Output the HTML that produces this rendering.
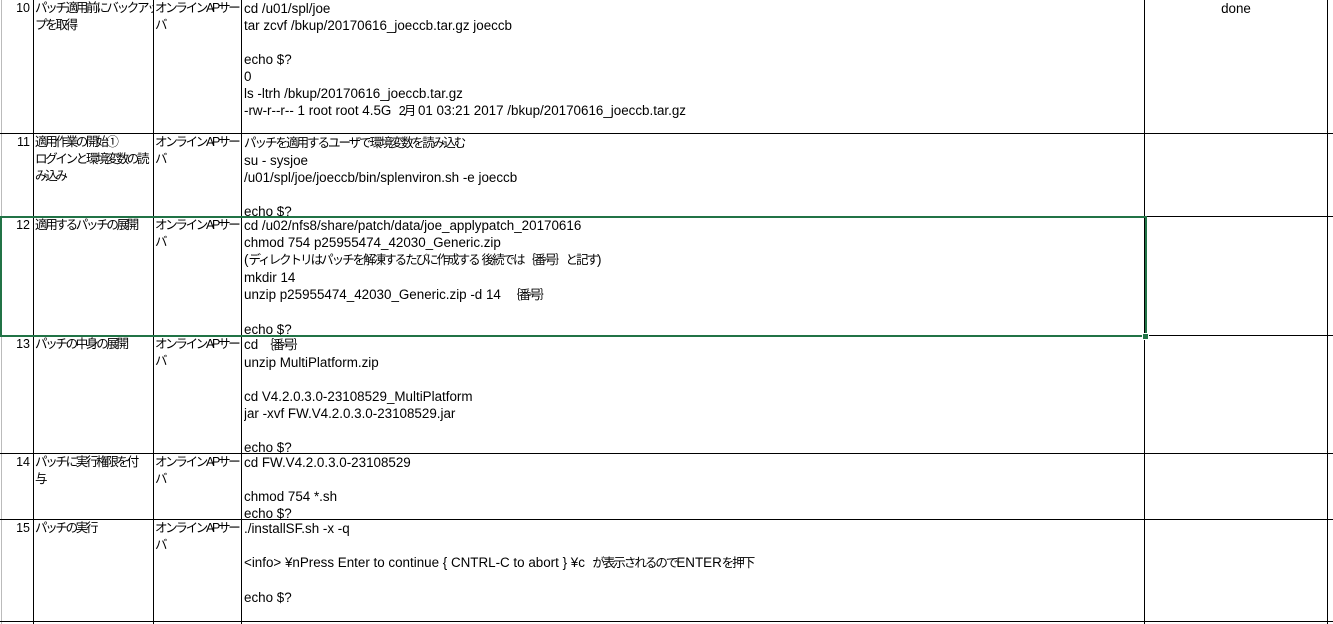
<!DOCTYPE html>
<html><head><meta charset="utf-8"><style>
body{margin:0;width:1333px;height:624px;overflow:hidden;background:#fff;position:relative;font-family:"Liberation Sans","Noto Sans CJK JP",sans-serif;font-size:13.4px;color:#000}
.v{position:absolute;top:0;height:624px;width:1px;background:#000;z-index:2}
.h{position:absolute;left:0;width:1333px;height:1px;background:#000;z-index:2}
.t{position:absolute;white-space:pre;line-height:17px;overflow:hidden}
.j{font-size:12.5px;letter-spacing:-2px}
.b{font-size:12.5px;letter-spacing:-2.3px}
.n{position:absolute;width:30px;text-align:right;line-height:17px;font-size:12.5px}
</style></head><body>
<div class="v" style="left:1px;background:#bbb"></div>
<div class="v" style="left:33px"></div>
<div class="v" style="left:153px"></div>
<div class="v" style="left:241px"></div>
<div class="v" style="left:1144px"></div>
<div class="v" style="left:1327px"></div>
<div class="h" style="top:133px"></div>
<div class="h" style="top:216px"></div>
<div class="h" style="top:335px"></div>
<div class="h" style="top:453px"></div>
<div class="h" style="top:519px"></div>
<div class="h" style="top:621px"></div>
<div style="position:absolute;left:0;top:216px;width:1143px;height:117px;border:2px solid #217346;z-index:3"></div>
<div style="position:absolute;left:1142px;top:333px;width:5px;height:5px;background:#217346;border:1px solid #fff;z-index:3"></div>

<div class="n" style="left:0;top:0">10</div>
<div class="t b" style="left:35px;top:0;width:118px">パッチ適用前にバックアッ
プを取得</div>
<div class="t b" style="left:155px;top:0;width:86px">オンラインAPサー
バ</div>
<div class="t" style="left:244px;top:0;width:900px">cd /u01/spl/joe
tar zcvf /bkup/20170616_joeccb.tar.gz joeccb

echo $?
0
ls -ltrh /bkup/20170616_joeccb.tar.gz
-rw-r--r-- 1 root root 4.5G  <span class="j">2月</span> 01 03:21 2017 /bkup/20170616_joeccb.tar.gz</div>
<div class="t" style="left:1145px;top:0;width:182px;text-align:center">done</div>

<div class="n" style="left:0;top:134px">11</div>
<div class="t b" style="left:35px;top:134px;width:118px">適用作業の開始①
ログインと環境変数の読
み込み</div>
<div class="t b" style="left:155px;top:134px;width:86px">オンラインAPサー
バ</div>
<div class="t" style="left:244px;top:134px;width:900px"><span class="j">パッチを適用するユーザで環境変数を読み込む</span>
su - sysjoe
/u01/spl/joe/joeccb/bin/splenviron.sh -e joeccb

echo $?</div>

<div class="n" style="left:0;top:217px">12</div>
<div class="t b" style="left:35px;top:217px;width:118px">適用するパッチの展開</div>
<div class="t b" style="left:155px;top:217px;width:86px">オンラインAPサー
バ</div>
<div class="t" style="left:244px;top:217px;width:900px">cd /u02/nfs8/share/patch/data/joe_applypatch_20170616
chmod 754 p25955474_42030_Generic.zip
(<span class="j">ディレクトリはパッチを解凍するたびに作成する  後続では｛番号｝と記す</span>)
mkdir 14
unzip p25955474_42030_Generic.zip -d 14  <span class="j">｛番号｝</span>

echo $?</div>

<div class="n" style="left:0;top:336px">13</div>
<div class="t b" style="left:35px;top:336px;width:118px">パッチの中身の展開</div>
<div class="t b" style="left:155px;top:336px;width:86px">オンラインAPサー
バ</div>
<div class="t" style="left:244px;top:336px;width:900px">cd <span class="j">｛番号｝</span>
unzip MultiPlatform.zip

cd V4.2.0.3.0-23108529_MultiPlatform
jar -xvf FW.V4.2.0.3.0-23108529.jar

echo $?</div>

<div class="n" style="left:0;top:454px">14</div>
<div class="t b" style="left:35px;top:454px;width:118px">パッチに実行権限を付
与</div>
<div class="t b" style="left:155px;top:454px;width:86px">オンラインAPサー
バ</div>
<div class="t" style="left:244px;top:454px;width:900px">cd FW.V4.2.0.3.0-23108529

chmod 754 *.sh
echo $?</div>

<div class="n" style="left:0;top:520px">15</div>
<div class="t b" style="left:35px;top:520px;width:118px">パッチの実行</div>
<div class="t b" style="left:155px;top:520px;width:86px">オンラインAPサー
バ</div>
<div class="t" style="left:244px;top:520px;width:900px">./installSF.sh -x -q

&lt;info&gt; ¥nPress Enter to continue { CNTRL-C to abort } ¥c  <span class="j">が表示されるので</span>ENTER<span class="j">を押下</span>

echo $?</div>
</body></html>
